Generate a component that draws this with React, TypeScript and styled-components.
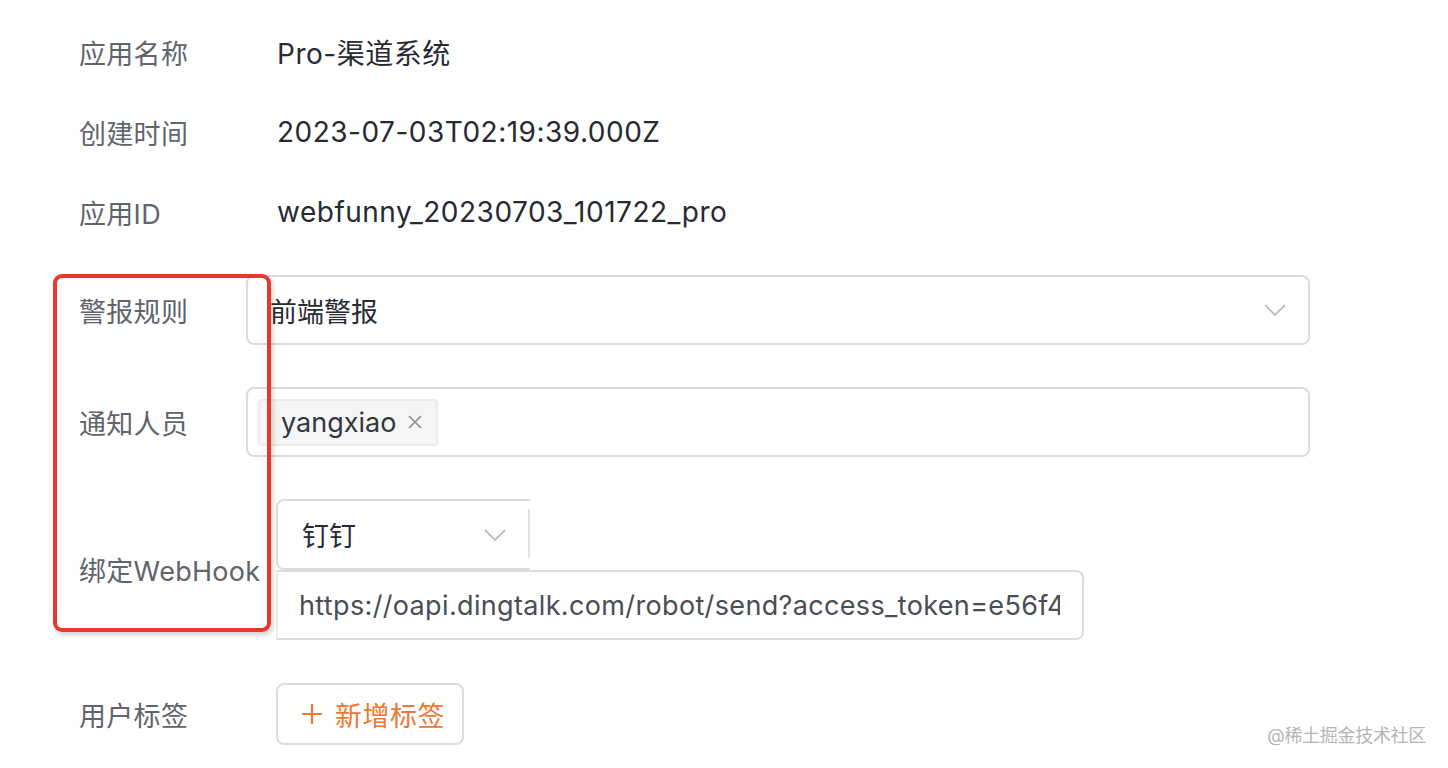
import React from 'react';
import styled, { createGlobalStyle } from 'styled-components';

const GlobalStyle = createGlobalStyle`
  html, body {
    margin: 0;
    padding: 0;
    background: #ffffff;
  }
  body {
    font-family: Inter, "Noto Sans CJK SC", sans-serif;
    -webkit-font-smoothing: antialiased;
  }
`;

const Page = styled.div`
  position: relative;
  width: 1448px;
  height: 768px;
  overflow: hidden;
  padding: 12px 0 0 79px;
  box-sizing: border-box;
`;

const Form = styled.div`
  display: flex;
  flex-direction: column;
`;

const Row = styled.div<{ $h: number; $mb?: number }>`
  display: flex;
  align-items: center;
  height: ${({ $h }) => $h}px;
  margin-bottom: ${({ $mb }) => $mb || 0}px;
`;

const Label = styled.div<{ $w?: number }>`
  width: ${({ $w }) => $w || 198}px;
  flex-shrink: 0;
  font-size: 27px;
  color: #60646c;
  white-space: nowrap;
  letter-spacing: 0.3px;
`;

const Value = styled.div`
  font-size: 28px;
  letter-spacing: 0.5px;
  color: #262a33;
  white-space: nowrap;
`;

const SelectBox = styled.div<{ $w: number }>`
  display: flex;
  align-items: center;
  box-sizing: border-box;
  width: ${({ $w }) => $w}px;
  height: 70px;
  border: 2px solid #dcdcdc;
  border-radius: 8px;
  padding: 0 22px 0 22px;
  font-size: 27px;
  color: #262a33;
`;

const SelectText = styled.span`
  flex: 1;
`;

const Chevron = styled.svg`
  width: 22px;
  height: 12px;
  flex-shrink: 0;
`;

const TagsBox = styled(SelectBox)`
  padding: 0 10px;
`;

const Tag = styled.div`
  display: flex;
  align-items: center;
  gap: 12px;
  height: 47px;
  box-sizing: border-box;
  padding: 0 14px 0 21px;
  background: #f5f5f5;
  border: 2px solid #ececec;
  border-radius: 4px;
  font-size: 27px;
  color: #333740;
`;

const Close = styled.svg`
  width: 14px;
  height: 14px;
`;

const HookGroup = styled.div`
  display: flex;
  flex-direction: column;
`;

const Addon = styled.div`
  position: relative;
  display: flex;
  align-items: center;
  box-sizing: border-box;
  width: 254px;
  height: 71px;
  border: 2px solid #dcdcdc;
  border-right: none;
  border-radius: 8px 0 0 8px;
  padding: 0 24px 0 24px;
  font-size: 27px;
  color: #262a33;

  &::after {
    content: '';
    position: absolute;
    right: 0;
    top: 8px;
    bottom: 10px;
    width: 2px;
    background: #e2e2e2;
  }
`;

const AddonInner = styled.div`
  display: flex;
  align-items: center;
  width: 206px;
`;

const UrlInput = styled.div`
  box-sizing: border-box;
  width: 808px;
  height: 70px;
  border: 2px solid #dcdcdc;
  border-left-color: #ececec;
  border-radius: 0 8px 8px 0;
  padding: 0 22px 0 21px;
  display: flex;
  align-items: center;
  overflow: hidden;
  font-size: 27px;
  letter-spacing: 0.35px;
  color: #4a4d55;
  white-space: nowrap;
`;

const UrlText = styled.span`
  overflow: hidden;
  display: block;
`;

const AddButton = styled.button`
  display: flex;
  align-items: center;
  gap: 12px;
  box-sizing: border-box;
  height: 62px;
  padding: 0 17px 0 23px;
  background: #ffffff;
  border: 2px solid #dcdcdc;
  border-radius: 8px;
  font-family: inherit;
  font-size: 27px;
  letter-spacing: 0.5px;
  color: #ee7733;
  cursor: pointer;
`;

const PlusIcon = styled.svg`
  width: 22px;
  height: 22px;
`;

const Highlight = styled.div`
  position: absolute;
  left: 53px;
  top: 274px;
  width: 218px;
  height: 358px;
  box-sizing: border-box;
  border: 4px solid #e8382b;
  border-radius: 9px;
  box-shadow: 2px 3px 5px rgba(0, 0, 0, 0.18);
  pointer-events: none;
`;

const Watermark = styled.div`
  position: absolute;
  right: 22px;
  bottom: 21px;
  font-size: 18px;
  color: #b5b5b5;
  letter-spacing: -0.3px;
`;

const ChevronDown = ({ color = '#bfbfbf' }: { color?: string }) => (
  <Chevron viewBox="0 0 22 12" fill="none">
    <path d="M1 1 L11 11 L21 1" stroke={color} strokeWidth="1.8" strokeLinejoin="round" />
  </Chevron>
);

export default function App() {
  return (
    <>
      <GlobalStyle />
      <Page>
        <Form>
          <Row $h={80}>
            <Label>应用名称</Label>
            <Value>Pro-渠道系统</Value>
          </Row>
          <Row $h={80}>
            <Label>创建时间</Label>
            <Value>2023-07-03T02:19:39.000Z</Value>
          </Row>
          <Row $h={80} $mb={23}>
            <Label>应用ID</Label>
            <Value>webfunny_20230703_101722_pro</Value>
          </Row>
          <Row $h={70} $mb={42}>
            <Label $w={167}>警报规则</Label>
            <SelectBox $w={1064}>
              <SelectText>前端警报</SelectText>
              <ChevronDown />
            </SelectBox>
          </Row>
          <Row $h={70} $mb={42}>
            <Label $w={167}>通知人员</Label>
            <TagsBox $w={1064}>
              <Tag>
                yangxiao
                <Close viewBox="0 0 14 14" fill="none">
                  <path d="M1 1 L13 13 M13 1 L1 13" stroke="#8c8c8c" strokeWidth="1.6" />
                </Close>
              </Tag>
            </TagsBox>
          </Row>
          <Row $h={141} $mb={43}>
            <Label $w={197}>绑定WebHook</Label>
            <HookGroup>
              <Addon>
                <AddonInner>
                  <SelectText>钉钉</SelectText>
                  <ChevronDown />
                </AddonInner>
              </Addon>
              <UrlInput>
                <UrlText>https://oapi.dingtalk.com/robot/send?access_token=e56f4e3a9c1b7d20f8e6</UrlText>
              </UrlInput>
            </HookGroup>
          </Row>
          <Row $h={62}>
            <Label $w={197}>用户标签</Label>
            <AddButton>
              <PlusIcon viewBox="0 0 22 22" fill="none">
                <path d="M11 1 V21 M1 11 H21" stroke="#ee7733" strokeWidth="2.2" />
              </PlusIcon>
              新增标签
            </AddButton>
          </Row>
        </Form>
        <Highlight />
        <Watermark>@稀土掘金技术社区</Watermark>
      </Page>
    </>
  );
}
